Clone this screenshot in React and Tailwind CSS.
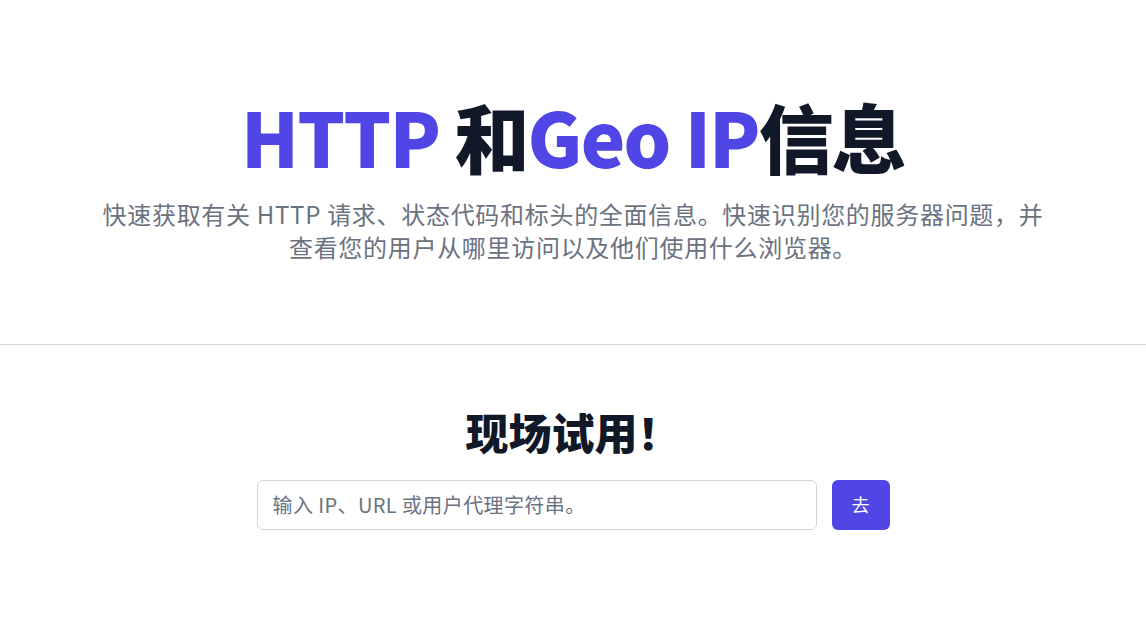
export default function App() {
  const font = { fontFamily: '"Noto Sans CJK SC", "Noto Sans", sans-serif' };
  return (
    <div className="min-h-screen bg-white" style={font}>
      <section className="flex flex-col items-center px-4 pt-[98px] pb-[81px] text-center">
        <h1 className="text-[75px] font-black leading-none tracking-tight text-[#111827]">
          <span className="text-[#4f46e5]">HTTP</span> 和<span className="text-[#4f46e5]">Geo IP</span>信息
        </h1>
        <p className="mt-[24px] max-w-[960px] text-[24px] leading-[33px] tracking-[0.7px] text-[#6b7280]">
          快速获取有关 HTTP 请求、状态代码和标头的全面信息。快速识别您的服务器问题，并查看您的用户从哪里访问以及他们使用什么浏览器。
        </p>
      </section>
      <div className="border-t border-[#d1d5db]" />
      <section className="flex flex-col items-center pt-[60px]">
        <h2 className="text-[43px] font-black leading-tight text-[#111827]">现场试用！</h2>
        <div className="mt-[21px] flex items-center gap-[15px]">
          <input
            type="text"
            placeholder="输入 IP、URL 或用户代理字符串。"
            className="h-[50px] w-[560px] rounded-md border border-[#d1d5db] px-[15px] text-[20px] tracking-[0.4px] text-[#111827] placeholder:text-[#6b7280] outline-none"
          />
          <button className="h-[50px] w-[58px] rounded-md bg-[#4f46e5] text-[18px] text-white">去</button>
        </div>
      </section>
    </div>
  );
}
